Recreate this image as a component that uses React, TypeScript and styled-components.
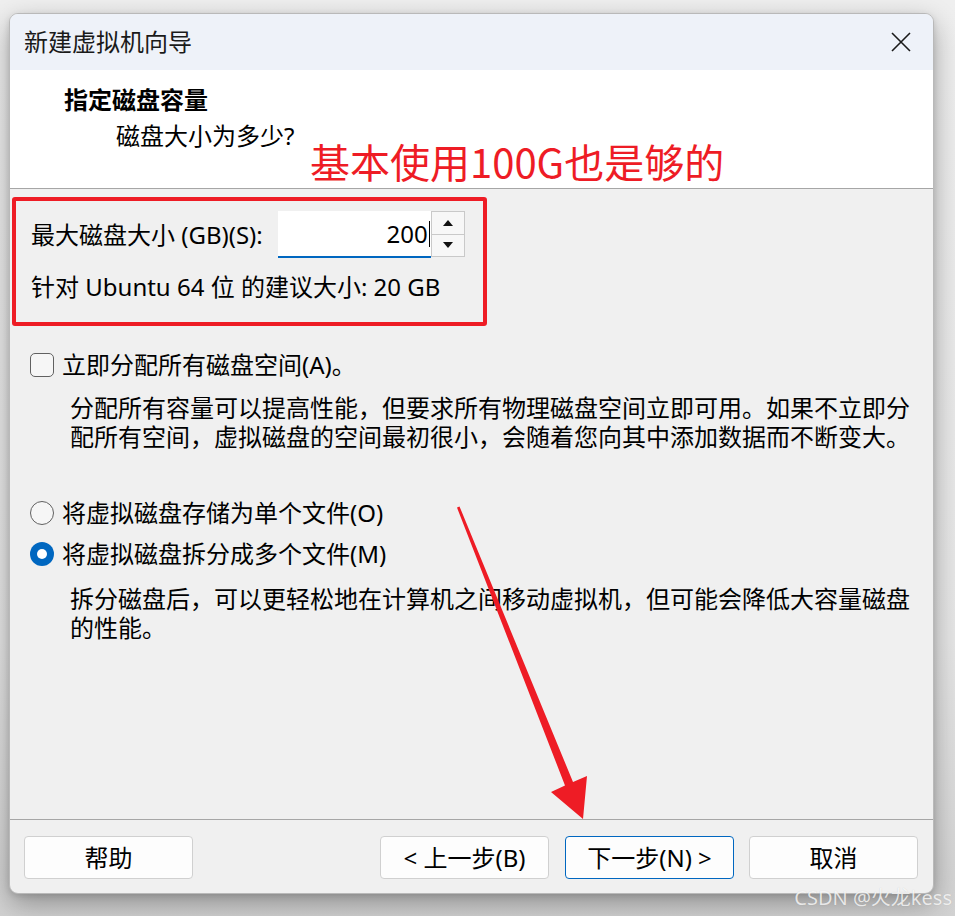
import React from "react";
import styled, { createGlobalStyle } from "styled-components";

const GlobalStyle = createGlobalStyle`
  html, body { margin: 0; padding: 0; }
  body {
    background: linear-gradient(180deg, #efefef 0%, #e6e6e6 70%, #d2d2d2 100%);
    font-family: "Noto Sans", "Noto Sans CJK SC", sans-serif;
    color: #000;
  }
  * { box-sizing: border-box; }
`;

const Page = styled.div`
  position: relative;
  width: 955px;
  height: 916px;
  overflow: hidden;
  padding: 13px 0 0 9px;
`;

const Window = styled.div`
  width: 925px;
  height: 881px;
  display: flex;
  flex-direction: column;
  border: 1px solid #b9b9b9;
  border-radius: 9px;
  overflow: hidden;
  background: #f0f0f0;
  box-shadow: 0 10px 28px rgba(0, 0, 0, 0.32), 0 2px 6px rgba(0, 0, 0, 0.12);
`;

const TitleBar = styled.div`
  height: 56px;
  flex: none;
  display: flex;
  align-items: center;
  justify-content: space-between;
  padding: 0 22px 0 14px;
  background: #eef2f9;
`;

const TitleText = styled.span`
  font-size: 24px;
  line-height: 30px;
  color: #1a1a1a;
`;

const CloseIcon = styled.svg`
  width: 20px;
  height: 20px;
  display: block;
`;

const Header = styled.div`
  position: relative;
  height: 119px;
  flex: none;
  background: #ffffff;
  border-bottom: 1px solid #a6a6a6;
  padding-top: 15px;
`;

const HeaderTitle = styled.div`
  padding-left: 54px;
  font-size: 24px;
  line-height: 30px;
  font-weight: 700;
`;

const HeaderSub = styled.div`
  padding-left: 106px;
  margin-top: 6px;
  font-size: 24px;
  line-height: 30px;
`;

const AnnotationText = styled.div`
  position: absolute;
  left: 300px;
  top: 69px;
  font-family: "Noto Sans CJK SC", "Noto Sans", sans-serif;
  font-size: 40px;
  line-height: 44px;
  color: #ee1c25;
  white-space: nowrap;
`;

const Body = styled.div`
  flex: 1;
  display: flex;
  flex-direction: column;
  font-size: 24px;
  line-height: 30px;
`;

const Highlight = styled.div`
  margin: 8px 0 0 2px;
  width: 475px;
  height: 129px;
  border: 4px solid #ee1c25;
  border-radius: 3px;
  padding: 10px 0 0 15px;
`;

const FieldRow = styled.div`
  display: flex;
  align-items: center;
`;

const FieldLabel = styled.span`
  white-space: nowrap;
`;

const InputBox = styled.div`
  margin-left: 15px;
  width: 153px;
  height: 47px;
  background: #ffffff;
  border-bottom: 2px solid #0067c0;
  display: flex;
  align-items: center;
  justify-content: flex-end;
  padding-right: 1px;
`;

const Caret = styled.span`
  width: 1px;
  height: 26px;
  background: #000;
  margin-left: 1px;
`;

const SpinButtons = styled.div`
  width: 34px;
  height: 46px;
  align-self: flex-start;
  display: flex;
  flex-direction: column;
`;

const SpinButton = styled.div`
  flex: 1;
  display: flex;
  align-items: center;
  justify-content: center;
  background: #f7f7f7;
  border: 1px solid #c9c9c9;
  & + & { margin-top: -1px; }
`;

const Hint = styled.div`
  margin-top: 14px;
  white-space: nowrap;
`;

const OptionRow = styled.label<{ $top: number }>`
  display: flex;
  align-items: center;
  gap: 8px;
  margin-top: ${(p) => p.$top}px;
  padding-left: 20px;
  white-space: nowrap;
`;

const CheckBox = styled.span`
  width: 24px;
  height: 24px;
  flex: none;
  border: 1.5px solid #616161;
  border-radius: 5px;
  background: #f6f6f6;
`;

const Radio = styled.span<{ $checked?: boolean }>`
  width: 24px;
  height: 24px;
  flex: none;
  border-radius: 50%;
  display: flex;
  align-items: center;
  justify-content: center;
  border: ${(p) => (p.$checked ? "none" : "1.5px solid #616161")};
  background: ${(p) => (p.$checked ? "#0067c0" : "#f6f6f6")};
  &::after {
    content: "";
    display: ${(p) => (p.$checked ? "block" : "none")};
    width: 10px;
    height: 10px;
    border-radius: 50%;
    background: #ffffff;
  }
`;

const Description = styled.div<{ $top: number }>`
  margin-top: ${(p) => p.$top}px;
  padding-left: 60px;
  line-height: 29px;
  white-space: nowrap;
`;

const Footer = styled.div`
  flex: none;
  display: flex;
  align-items: flex-start;
  border-top: 1px solid #a6a6a6;
  padding: 16px 15px 14px 14px;
`;

const Spacer = styled.div`
  flex: 1;
`;

const Button = styled.button<{ $primary?: boolean; $gap?: number }>`
  width: 169px;
  height: 43px;
  margin-left: ${(p) => p.$gap ?? 0}px;
  font-family: "Noto Sans", "Noto Sans CJK SC", sans-serif;
  font-size: 24px;
  line-height: 30px;
  color: #000;
  background: #fdfdfd;
  border: 1px solid ${(p) => (p.$primary ? "#0067c0" : "#d0d0d0")};
  border-radius: 4px;
  padding: 0;
  display: flex;
  align-items: center;
  justify-content: center;
`;

const Overlay = styled.svg`
  position: absolute;
  left: 0;
  top: 0;
  width: 955px;
  height: 916px;
  pointer-events: none;
`;

const Watermark = styled.div`
  position: absolute;
  right: 3px;
  bottom: 6px;
  font-family: "Noto Sans", "Noto Sans CJK SC", sans-serif;
  font-size: 20px;
  line-height: 24px;
  color: rgba(255, 255, 255, 0.78);
  text-shadow: 0 0 1px rgba(0, 0, 0, 0.15);
  white-space: nowrap;
`;

const Tri = ({ up }: { up?: boolean }) => (
  <svg width="12" height="8" viewBox="0 0 12 8">
    <polygon points={up ? "1,7 11,7 6,1" : "1,1 11,1 6,7"} fill="#111" />
  </svg>
);

export default function App() {
  return (
    <>
      <GlobalStyle />
      <Page>
        <Window>
          <TitleBar>
            <TitleText>新建虚拟机向导</TitleText>
            <CloseIcon viewBox="0 0 20 20">
              <path d="M1 1 L19 19 M19 1 L1 19" stroke="#1a1a1a" strokeWidth="1.6" fill="none" />
            </CloseIcon>
          </TitleBar>
          <Header>
            <HeaderTitle>指定磁盘容量</HeaderTitle>
            <HeaderSub>磁盘大小为多少?</HeaderSub>
            <AnnotationText>基本使用100G也是够的</AnnotationText>
          </Header>
          <Body>
            <Highlight>
              <FieldRow>
                <FieldLabel>最大磁盘大小 (GB)(S):</FieldLabel>
                <InputBox>
                  200
                  <Caret />
                </InputBox>
                <SpinButtons>
                  <SpinButton>
                    <Tri up />
                  </SpinButton>
                  <SpinButton>
                    <Tri />
                  </SpinButton>
                </SpinButtons>
              </FieldRow>
              <Hint>针对 Ubuntu 64 位 的建议大小: 20 GB</Hint>
            </Highlight>
            <OptionRow $top={24}>
              <CheckBox />
              立即分配所有磁盘空间(A)。
            </OptionRow>
            <Description $top={13}>
              分配所有容量可以提高性能，但要求所有物理磁盘空间立即可用。如果不立即分
              <br />
              配所有空间，虚拟磁盘的空间最初很小，会随着您向其中添加数据而不断变大。
            </Description>
            <OptionRow $top={47}>
              <Radio />
              将虚拟磁盘存储为单个文件(O)
            </OptionRow>
            <OptionRow $top={11}>
              <Radio $checked />
              将虚拟磁盘拆分成多个文件(M)
            </OptionRow>
            <Description $top={15}>
              拆分磁盘后，可以更轻松地在计算机之间移动虚拟机，但可能会降低大容量磁盘
              <br />
              的性能。
            </Description>
          </Body>
          <Footer>
            <Button>帮助</Button>
            <Spacer />
            <Button>&lt; 上一步(B)</Button>
            <Button $primary $gap={16}>
              下一步(N) &gt;
            </Button>
            <Button $gap={15}>取消</Button>
          </Footer>
        </Window>
        <Overlay viewBox="0 0 955 916">
          <polygon
            points="457,507.6 459.5,506.4 573,782 587,776 583,819 551,792 565,785.5"
            fill="#ee1c25"
          />
        </Overlay>
        <Watermark>CSDN @火龙kess</Watermark>
      </Page>
    </>
  );
}
